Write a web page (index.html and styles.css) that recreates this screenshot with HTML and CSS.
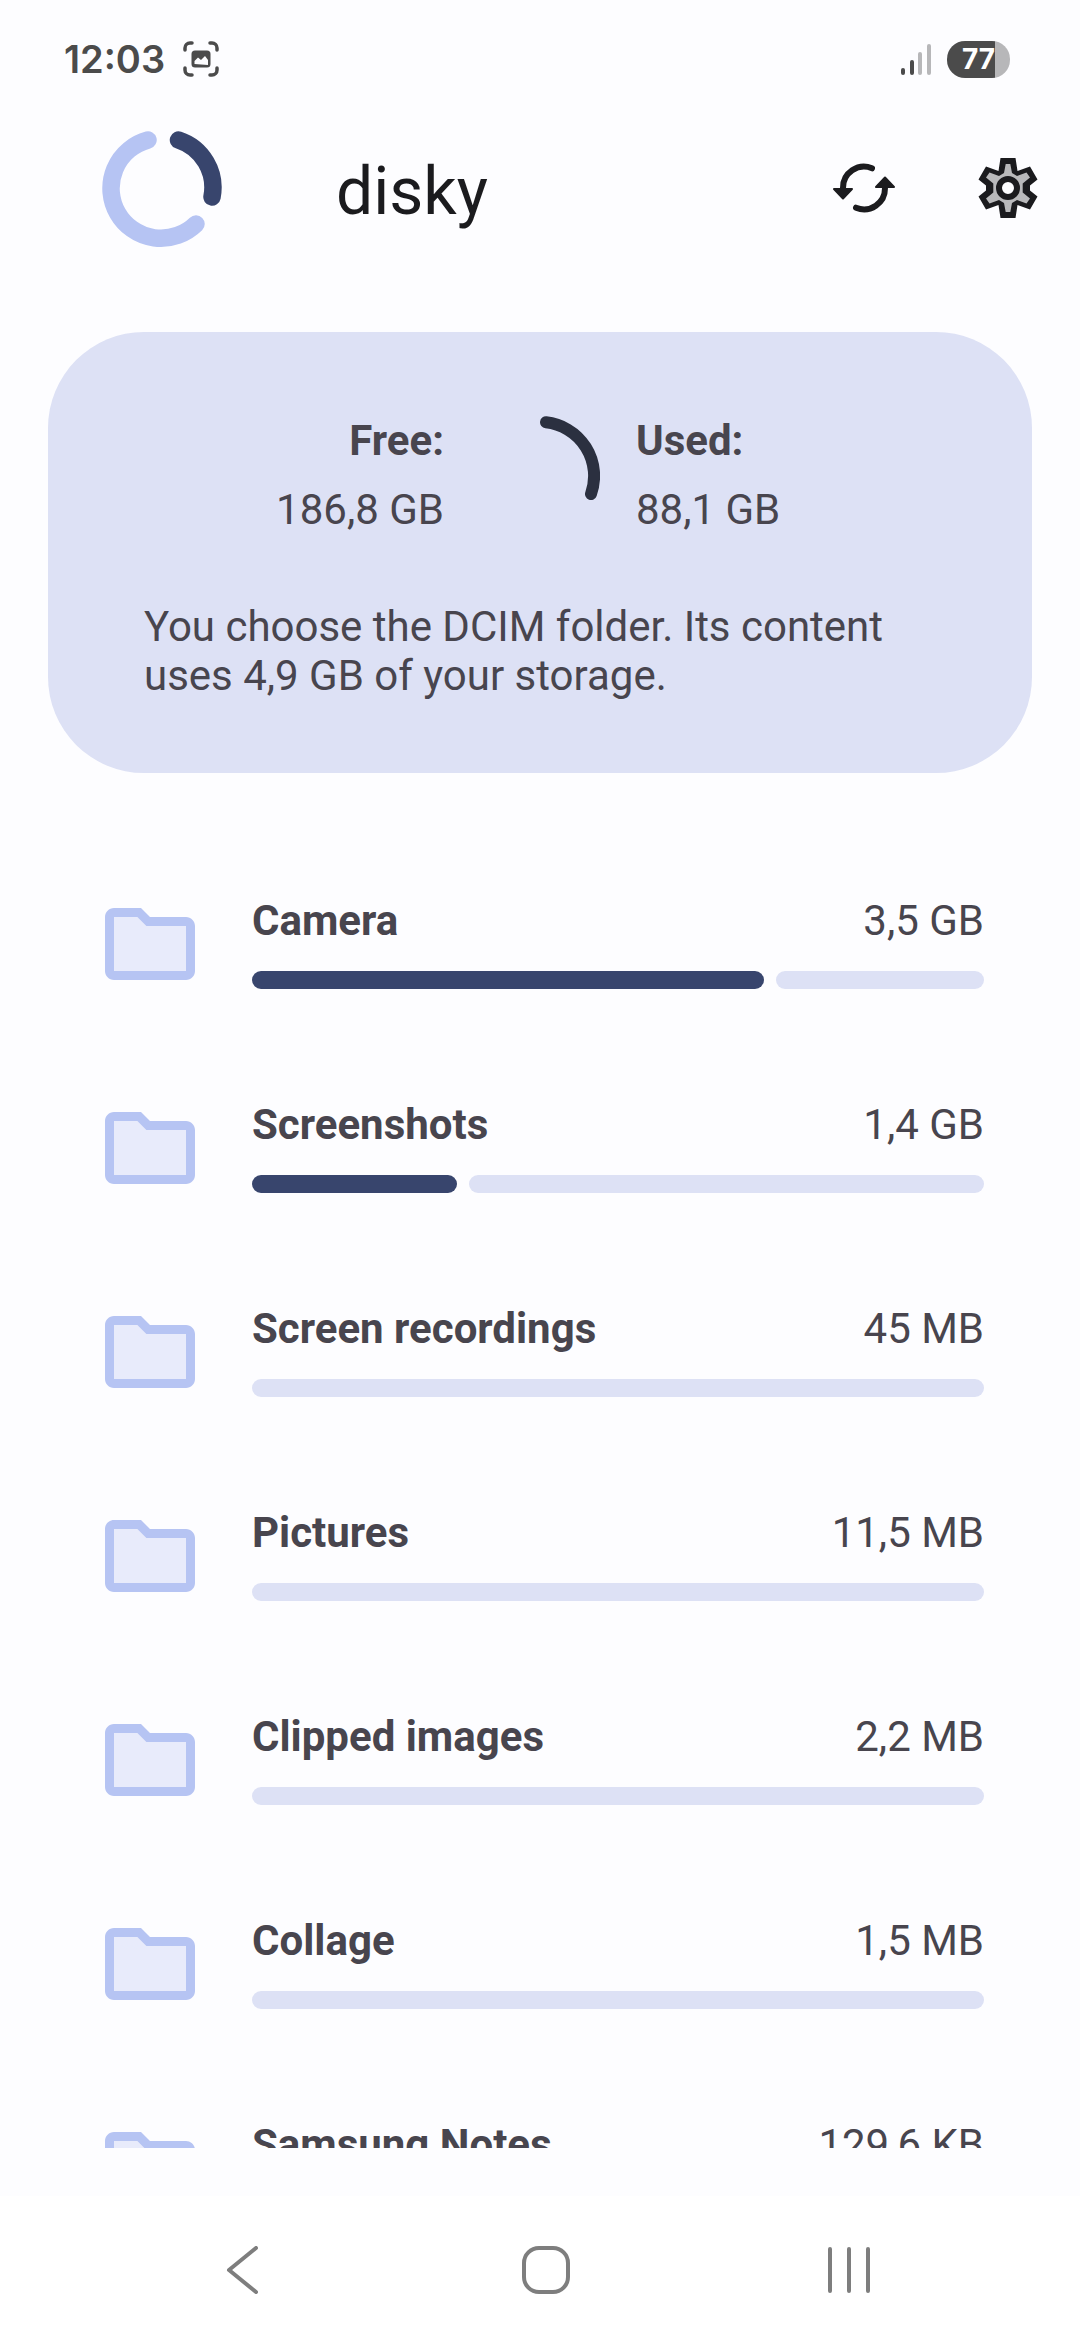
FILE: index.html
```html
<!DOCTYPE html>
<html lang="en">
<head>
  <meta charset="UTF-8" />
  <meta name="viewport" content="width=device-width, initial-scale=1.0"/>
  <title>disky</title>
  <link rel="stylesheet" href="styles.css">
</head>
<body>

  <!-- Shared folder icon -->
  <svg class="sprite" width="0" height="0" aria-hidden="true">
    <symbol id="folder" viewBox="0 0 24 24">
      <path fill="#e8ebfb" d="M3.5 5.5H9l2 2h9.5v11h-17z"/>
      <path fill="#b6c4f3" d="M20 6h-8l-2-2H4c-1.1 0-2 .9-2 2v12c0 1.1.9 2 2 2h16c1.1 0 2-.9 2-2V8c0-1.1-.9-2-2-2zm0 12H4V6h5.200l2 2H20v10z"/>
    </symbol>
  </svg>

  <!-- Status bar -->
  <div class="status-bar">
    <span class="clock">12:03</span>
    <svg class="capture-icon" width="36" height="36" viewBox="0 0 36 36" fill="none" stroke="#4b4b4b" stroke-width="3.5" stroke-linecap="round">
      <path d="M2 9V7a5 5 0 0 1 5-5h2M27 2h2a5 5 0 0 1 5 5v2M34 27v2a5 5 0 0 1-5 5h-2M9 34H7a5 5 0 0 1-5-5v-2"/>
      <rect x="8.5" y="9.5" width="19" height="17" rx="3.5" fill="#4b4b4b" stroke="none"/>
      <path d="M11.5 23v-3l3.5-3.5 3 2.5 4-4 3 4v5z" fill="#fdfdff" stroke="none"/>
    </svg>
    <svg class="signal-icon" width="32" height="34" viewBox="0 0 32 34" stroke-width="4" stroke-linecap="round">
      <path stroke="#4b4b4b" d="M3 28v3M12 20v11"/>
      <path stroke="#b7b7b9" d="M20 12v19M29 4v27"/>
    </svg>
    <span class="battery">77</span>
  </div>

  <!-- App bar -->
  <header class="app-bar">
    <svg class="logo" width="120" height="120" viewBox="0 0 120 120" fill="none" stroke-width="17.5" stroke-linecap="round">
      <path stroke="#b6c4f3" d="M46 12A50 50 0 1 0 94 96"/>
      <path stroke="#38456d" d="M76.500 12A50 50 0 0 1 110 69"/>
    </svg>
    <h1>disky</h1>
    <button type="button" aria-label="Refresh">
      <svg width="72" height="72" viewBox="0 0 72 72" fill="none" stroke="#1b1b1e" stroke-width="6" stroke-linecap="round" stroke-linejoin="round">
        <path d="M44 16.300A21 21 0 0 0 15 36"/>
        <path d="M28 55.700A21 21 0 0 0 57 36"/>
        <path fill="#1b1b1e" stroke-width="2" d="M6 37h18L15 46.500zM48 35h18L57 25.500z"/>
      </svg>
    </button>
    <button type="button" aria-label="Settings">
      <svg width="72" height="72" viewBox="0 0 72 72">
        <path fill="#1b1b1e" d="M28.500 6h15l2 13L58 14.500l7.500 13-7.500 6v5l7.500 6-7.500 13L45.500 53l-2 13h-15l-2-13L14 57.500l-7.500-13 7.500-6v-5l-7.500-6 7.500-13L26.500 19z"/>
        <path fill="#b9b9bb" d="M33.700 12h4.600l1.700 9 5 3 9.500-3.500 3.500 5-7.300 6v9l7.300 6-3.500 5L45 48l-5 3-1.700 9h-4.600L32 51l-5-3-9.500 3.500-3.500-5 7.300-6v-9l-7.300-6 3.500-5L27 24l5-3z"/>
        <circle cx="36" cy="36" r="9" fill="#fdfdff" stroke="#1b1b1e" stroke-width="6"/>
      </svg>
    </button>
  </header>

  <!-- Storage summary -->
  <section class="summary">
    <div class="usage">
      <div class="usage-free">
        <strong>Free:</strong>
        <span>186,8 GB</span>
      </div>
      <svg width="120" height="120" viewBox="0 0 120 120" fill="none">
        <path stroke="#2b3040" stroke-width="12" stroke-linecap="round" d="M66 6.300A54 54 0 0 1 111 78"/>
      </svg>
      <div class="usage-used">
        <strong>Used:</strong>
        <span>88,1 GB</span>
      </div>
    </div>
    <p>You choose the DCIM folder. Its content uses 4,9 GB of your storage.</p>
  </section>

  <!-- Folder list -->
  <main class="folders">
    <div class="folder">
      <svg class="folder-icon"><use href="#folder"/></svg>
      <div class="folder-info">
        <div class="folder-text"><strong>Camera</strong><span>3,5 GB</span></div>
        <div class="bar"><div class="bar-used" style="width: 70%"></div><div class="bar-rest"></div></div>
      </div>
    </div>

    <div class="folder">
      <svg class="folder-icon"><use href="#folder"/></svg>
      <div class="folder-info">
        <div class="folder-text"><strong>Screenshots</strong><span>1,4 GB</span></div>
        <div class="bar"><div class="bar-used" style="width: 28%"></div><div class="bar-rest"></div></div>
      </div>
    </div>

    <div class="folder">
      <svg class="folder-icon"><use href="#folder"/></svg>
      <div class="folder-info">
        <div class="folder-text"><strong>Screen recordings</strong><span>45 MB</span></div>
        <div class="bar"><div class="bar-rest"></div></div>
      </div>
    </div>

    <div class="folder">
      <svg class="folder-icon"><use href="#folder"/></svg>
      <div class="folder-info">
        <div class="folder-text"><strong>Pictures</strong><span>11,5 MB</span></div>
        <div class="bar"><div class="bar-rest"></div></div>
      </div>
    </div>

    <div class="folder">
      <svg class="folder-icon"><use href="#folder"/></svg>
      <div class="folder-info">
        <div class="folder-text"><strong>Clipped images</strong><span>2,2 MB</span></div>
        <div class="bar"><div class="bar-rest"></div></div>
      </div>
    </div>

    <div class="folder">
      <svg class="folder-icon"><use href="#folder"/></svg>
      <div class="folder-info">
        <div class="folder-text"><strong>Collage</strong><span>1,5 MB</span></div>
        <div class="bar"><div class="bar-rest"></div></div>
      </div>
    </div>

    <div class="folder">
      <svg class="folder-icon"><use href="#folder"/></svg>
      <div class="folder-info">
        <div class="folder-text"><strong>Samsung Notes</strong><span>129,6 KB</span></div>
        <div class="bar"><div class="bar-rest"></div></div>
      </div>
    </div>
  </main>

  <!-- System navigation -->
  <nav class="nav-bar">
    <button type="button" aria-label="Back">
      <svg width="48" height="48" viewBox="0 0 48 48"><path d="M37 2L10 24l27 22"/></svg>
    </button>
    <button type="button" aria-label="Home">
      <svg width="48" height="48" viewBox="0 0 48 48"><rect x="2" y="2" width="44" height="44" rx="15"/></svg>
    </button>
    <button type="button" aria-label="Recent apps">
      <svg width="48" height="48" viewBox="0 0 48 48"><path d="M5 3v42M24 3v42M43 3v42"/></svg>
    </button>
  </nav>

</body>
</html>
```
FILE: styles.css
```css
* {
  box-sizing: border-box;
}

body {
  margin: 0;
  height: 100vh;
  display: flex;
  flex-direction: column;
  font-family: Roboto, sans-serif;
  font-size: 42px;
  line-height: 49px;
  background-color: #fdfdff;
  color: #48454e;
}

svg {
  display: block;
  flex-shrink: 0;
}

button {
  display: flex;
  align-items: center;
  justify-content: center;
  padding: 0;
  border: none;
  background: none;
  cursor: pointer;
}

.sprite {
  position: absolute;
}

.status-bar {
  display: flex;
  align-items: center;
  flex-shrink: 0;
  height: 104px;
  padding: 14px 70px 0 64px;
  color: #4b4b4b;
}

.clock {
  font-family: Inter, sans-serif;
  font-size: 38px;
  font-weight: 600;
}

.capture-icon {
  margin-left: 18px;
}

.signal-icon {
  margin-left: auto;
}

.battery {
  width: 63px;
  height: 37px;
  margin-left: 15px;
  border-radius: 18px;
  background: linear-gradient(to right, #4b4b4b 48px, #b7b7b9 48px);
  color: #fff;
  font-family: Inter, sans-serif;
  font-size: 28px;
  font-weight: 700;
  line-height: 37px;
  text-align: center;
}

.app-bar {
  display: flex;
  align-items: center;
  flex-shrink: 0;
  height: 168px;
  padding-left: 102px;
}

.app-bar h1 {
  flex: 1;
  margin: 0 0 0 114px;
  padding-top: 8px;
  color: #1b1b1e;
  font-size: 66px;
  font-weight: 400;
  line-height: 84px;
}

.app-bar button {
  width: 144px;
  height: 144px;
}

.summary {
  flex-shrink: 0;
  margin: 60px 48px 69px;
  padding: 84px 96px 73px;
  border-radius: 96px;
  background-color: #dde1f5;
}

.usage {
  display: grid;
  grid-template-columns: 1fr 120px 1fr;
  gap: 36px;
}

.usage-free,
.usage-used {
  display: flex;
  flex-direction: column;
  gap: 20px;
}

.usage-free {
  align-items: flex-end;
}

.summary p {
  margin: 66px 0 0;
}

.folders {
  flex: 1;
  min-height: 0;
  margin-bottom: 48px;
  overflow-y: auto;
  scrollbar-width: none;
}

.folder {
  display: flex;
  gap: 48px;
  padding: 48px 96px;
}

.folder-icon {
  width: 108px;
  height: 108px;
}

.folder-info {
  flex: 1;
}

.folder-text {
  display: flex;
  justify-content: space-between;
  line-height: 62px;
}

.bar {
  display: flex;
  gap: 12px;
  height: 18px;
  margin-top: 19px;
}

.bar-used,
.bar-rest {
  border-radius: 9px;
}

.bar-used {
  background-color: #38456d;
}

.bar-rest {
  flex: 1;
  background-color: #dde1f5;
}

.nav-bar {
  display: flex;
  flex-shrink: 0;
  height: 144px;
  padding: 4px 80px 0 92px;
  background-color: #fff;
}

.nav-bar button {
  flex: 1;
}

.nav-bar svg {
  fill: none;
  stroke: #7e7e7e;
  stroke-width: 4px;
  stroke-linecap: round;
  stroke-linejoin: round;
}
```
